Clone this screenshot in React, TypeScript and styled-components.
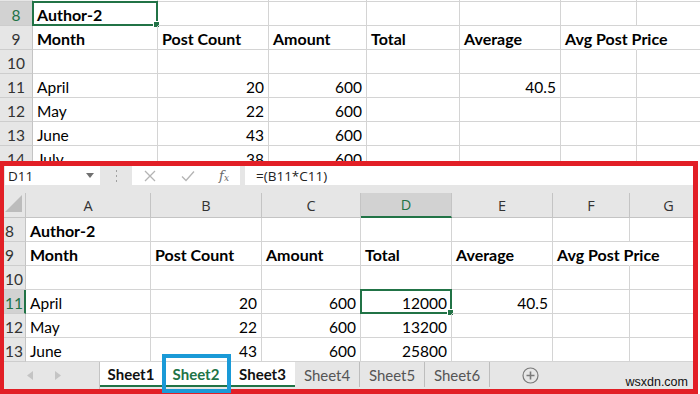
import React from "react";
import styled, { createGlobalStyle, css } from "styled-components";

const GREEN = "#217346";
const GRID = "#d4d4d4";
const HEADER_BG = "#e6e6e6";
const HEADER_SEL = "#d2d2d2";
const RED = "#e21f26";

type CellData = { v?: string | number; bold?: boolean; selected?: boolean };
type RowData = { n: number; cells: CellData[]; selected?: boolean };

const TOP_COLS = "33px 125px 111px 98px 93px 101px 76px 80px";
const BOTTOM_COLS = "22px 125px 111px 99px 91px 101px 77px 78px";

const headings = ["Month", "Post Count", "Amount", "Total", "Average", "Avg Post Price"].map(
  (v) => ({ v, bold: true })
);

const topRows: RowData[] = [
  { n: 7, cells: [] },
  { n: 8, selected: true, cells: [{ v: "Author-2", bold: true, selected: true }] },
  { n: 9, cells: headings },
  { n: 10, cells: [] },
  { n: 11, cells: [{ v: "April" }, { v: 20 }, { v: 600 }, {}, { v: 40.5 }] },
  { n: 12, cells: [{ v: "May" }, { v: 22 }, { v: 600 }] },
  { n: 13, cells: [{ v: "June" }, { v: 43 }, { v: 600 }] },
  { n: 14, cells: [{ v: "July" }, { v: 38 }, { v: 600 }] },
];

const bottomRows: RowData[] = [
  { n: 8, cells: [{ v: "Author-2", bold: true }] },
  { n: 9, cells: headings },
  { n: 10, cells: [] },
  {
    n: 11,
    selected: true,
    cells: [{ v: "April" }, { v: 20 }, { v: 600 }, { v: 12000, selected: true }, { v: 40.5 }],
  },
  { n: 12, cells: [{ v: "May" }, { v: 22 }, { v: 600 }, { v: 13200 }] },
  { n: 13, cells: [{ v: "June" }, { v: 43 }, { v: 600 }, { v: 25800 }] },
];

const letters = ["A", "B", "C", "D", "E", "F", "G"];
const sheets = [
  { name: "Sheet1", width: 62 },
  { name: "Sheet2", width: 68 },
  { name: "Sheet3", width: 65 },
  { name: "Sheet4", width: 65 },
  { name: "Sheet5", width: 65 },
  { name: "Sheet6", width: 65 },
];

function SheetRows({ rows, narrow }: { rows: RowData[]; narrow?: boolean }) {
  return (
    <>
      {rows.map((row, i) => (
        <Row key={row.n} $cols={narrow ? BOTTOM_COLS : TOP_COLS} $scrolled={!narrow && i === 0}>
          <RowNumber $selected={row.selected} $narrow={narrow}>
            {row.n}
          </RowNumber>
          {letters.map((_, c) => {
            const cell = row.cells[c] || {};
            const isNumber = typeof cell.v === "number";
            const spill = typeof cell.v === "string" && cell.v.length > 12;
            return (
              <Cell
                key={c}
                $right={isNumber}
                $bold={cell.bold}
                $selected={cell.selected}
                $spill={spill}
              >
                {cell.v}
              </Cell>
            );
          })}
        </Row>
      ))}
    </>
  );
}

function FormulaBar() {
  return (
    <FormulaBarContainer>
      <NameBox>
        D11
        <svg width="8" height="5" viewBox="0 0 8 5">
          <path d="M0 0h8L4 5z" fill="#707070" />
        </svg>
      </NameBox>
      <Grip>
        <svg width="3" height="12" viewBox="0 0 3 12">
          <rect x="1" y="0" width="1" height="2" fill="#a0a0a0" />
          <rect x="1" y="5" width="1" height="2" fill="#a0a0a0" />
          <rect x="1" y="10" width="1" height="2" fill="#a0a0a0" />
        </svg>
      </Grip>
      <FormulaButtons>
        <svg width="12" height="12" viewBox="0 0 12 12">
          <path d="M1 1l10 10M11 1L1 11" stroke="#b4b4b4" strokeWidth="1.3" />
        </svg>
        <svg width="14" height="12" viewBox="0 0 14 12">
          <path d="M1 6.5l4 4L13 1.5" stroke="#b4b4b4" strokeWidth="1.3" fill="none" />
        </svg>
        <FxLabel>
          f<sub>x</sub>
        </FxLabel>
      </FormulaButtons>
      <FormulaInput>=(B11*C11)</FormulaInput>
    </FormulaBarContainer>
  );
}

function ColumnHeaders() {
  return (
    <HeaderStrip>
      <Row $cols={BOTTOM_COLS} $header>
        <Corner>
          <svg width="17" height="17" viewBox="0 0 17 17">
            <path d="M17 0V17H0z" fill="#bcbcbc" />
          </svg>
        </Corner>
        {letters.map((l) => (
          <ColumnLetter key={l} $selected={l === "D"}>
            {l}
          </ColumnLetter>
        ))}
      </Row>
    </HeaderStrip>
  );
}

function TabBar() {
  return (
    <TabBarContainer>
      <TabNav>
        <svg width="6" height="9" viewBox="0 0 6 9">
          <path d="M6 0v9L0 4.5z" fill="#c4c4c4" />
        </svg>
        <svg width="6" height="9" viewBox="0 0 6 9">
          <path d="M0 0v9l6-4.5z" fill="#c4c4c4" />
        </svg>
      </TabNav>
      {sheets.map((s, i) => (
        <Tab key={s.name} $width={s.width} $grouped={i < 3} $active={i === 1}>
          {s.name}
        </Tab>
      ))}
      <AddSheet>
        <svg width="17" height="17" viewBox="0 0 17 17">
          <circle cx="8.5" cy="8.5" r="7.5" stroke="#7a7a7a" strokeWidth="1.2" fill="none" />
          <path d="M8.5 4.5v8M4.5 8.5h8" stroke="#7a7a7a" strokeWidth="1.6" />
        </svg>
      </AddSheet>
      <Watermark>wsxdn.com</Watermark>
    </TabBarContainer>
  );
}

export default function App() {
  return (
    <>
      <GlobalStyle />
      <Page>
        <TopSheet>
          <SheetRows rows={topRows} />
        </TopSheet>
        <Highlight>
          <FormulaBar />
          <ColumnHeaders />
          <BottomGrid>
            <SheetRows rows={bottomRows} narrow />
          </BottomGrid>
          <TabBar />
        </Highlight>
      </Page>
    </>
  );
}

const GlobalStyle = createGlobalStyle`
  html, body {
    margin: 0;
    padding: 0;
    background: #ffffff;
  }
  body {
    font-family: Lato, "Liberation Sans", sans-serif;
  }
`;

const Page = styled.div`
  width: 700px;
  height: 394px;
  overflow: hidden;
  background: #ffffff;
`;

const TopSheet = styled.div`
  height: 161px;
  overflow: hidden;
`;

const Row = styled.div<{ $cols: string; $scrolled?: boolean; $header?: boolean }>`
  display: grid;
  grid-template-columns: ${(p) => p.$cols};
  height: ${(p) => (p.$header ? 25 : 24)}px;
  ${(p) =>
    p.$scrolled &&
    css`
      margin-top: -22px;
    `}
`;

const RowNumber = styled.div<{ $selected?: boolean; $narrow?: boolean }>`
  display: flex;
  align-items: center;
  justify-content: ${(p) => (p.$narrow ? "flex-start" : "center")};
  padding-left: ${(p) => (p.$narrow ? "1px" : "0")};
  box-sizing: border-box;
  background: ${(p) => (p.$selected ? HEADER_SEL : HEADER_BG)};
  color: ${(p) => (p.$selected ? GREEN : "#333")};
  border-bottom: 1px solid #cdcdcd;
  border-right: ${(p) => (p.$selected && p.$narrow ? `2px solid ${GREEN}` : "1px solid #c4c4c4")};
  font-size: 15.5px;
  padding-top: 2px;
  overflow: hidden;
`;

const Cell = styled.div<{ $right?: boolean; $bold?: boolean; $selected?: boolean; $spill?: boolean }>`
  position: relative;
  display: flex;
  align-items: center;
  justify-content: ${(p) => (p.$right ? "flex-end" : "flex-start")};
  box-sizing: border-box;
  padding: 2px 4px 0 4px;
  border-right: 1px solid ${(p) => (p.$spill ? "transparent" : GRID)};
  border-bottom: 1px solid ${GRID};
  font-size: ${(p) => (p.$bold ? 16 : 15.5)}px;
  font-weight: ${(p) => (p.$bold ? 700 : 400)};
  color: #000;
  white-space: nowrap;
  overflow: visible;
  z-index: ${(p) => (p.$spill ? 1 : 0)};

  ${(p) =>
    p.$selected &&
    css`
      &::after {
        content: "";
        position: absolute;
        left: -1px;
        top: -1px;
        right: -1px;
        bottom: -1px;
        border: 2px solid ${GREEN};
      }
      &::before {
        content: "";
        position: absolute;
        right: -3px;
        bottom: -3px;
        width: 5px;
        height: 5px;
        background: ${GREEN};
        border: 1px solid #fff;
        z-index: 2;
      }
    `}
`;

const Highlight = styled.div`
  width: 698px;
  height: 233px;
  box-sizing: border-box;
  border: 5px solid ${RED};
  border-left-width: 4px;
  display: flex;
  flex-direction: column;
  background: ${HEADER_BG};
`;

const FormulaBarContainer = styled.div`
  display: flex;
  height: 19px;
  background: ${HEADER_BG};
  font-family: "Open Sans", "Noto Sans", sans-serif;
  font-size: 13.5px;
  color: #222;
`;

const NameBox = styled.div`
  width: 95px;
  margin-left: 1px;
  background: #fff;
  display: flex;
  align-items: center;
  justify-content: space-between;
  padding: 0 6px 0 3px;
  box-sizing: border-box;
`;

const Grip = styled.div`
  width: 32px;
  display: flex;
  align-items: center;
  justify-content: center;
`;

const FormulaButtons = styled.div`
  width: 108px;
  background: #fff;
  display: flex;
  align-items: center;
  justify-content: space-between;
  padding: 0 11px 0 12px;
  box-sizing: border-box;
`;

const FxLabel = styled.span`
  font-family: "DejaVu Serif", "Liberation Serif", serif;
  font-style: italic;
  font-size: 13px;
  color: #6a6a6a;
  line-height: 1;

  sub {
    font-size: 9px;
    vertical-align: -1px;
  }
`;

const FormulaInput = styled.div`
  flex: 1;
  margin-left: 5px;
  background: #fff;
  display: flex;
  align-items: center;
  padding-left: 11px;
`;

const HeaderStrip = styled.div`
  padding-top: 8px;
  background: ${HEADER_BG};
  overflow: hidden;
`;

const Corner = styled.div`
  display: flex;
  align-items: flex-end;
  justify-content: flex-end;
  padding: 0 3px 5px 0;
  box-sizing: border-box;
  border-right: 1px solid #c4c4c4;
  border-bottom: 1px solid #c4c4c4;
`;

const ColumnLetter = styled.div<{ $selected?: boolean }>`
  display: flex;
  align-items: center;
  justify-content: center;
  box-sizing: border-box;
  font-family: "Open Sans", "Noto Sans", sans-serif;
  font-size: 14.5px;
  color: ${(p) => (p.$selected ? GREEN : "#333")};
  background: ${(p) => (p.$selected ? HEADER_SEL : HEADER_BG)};
  border-right: 1px solid #c4c4c4;
  border-bottom: ${(p) => (p.$selected ? `2px solid ${GREEN}` : "1px solid #c4c4c4")};
`;

const BottomGrid = styled.div`
  height: 144px;
  background: #fff;
  overflow: hidden;
`;

const TabBarContainer = styled.div`
  position: relative;
  flex: 1;
  display: flex;
  align-items: stretch;
  background: ${HEADER_BG};
  font-family: Lato, "Open Sans", sans-serif;
  font-size: 15px;
`;

const TabNav = styled.div`
  width: 96px;
  display: flex;
  align-items: center;
  gap: 22px;
  padding-left: 23px;
  box-sizing: border-box;
  border-right: 1px solid #c4c4c4;
`;

const Tab = styled.div<{ $width: number; $grouped?: boolean; $active?: boolean }>`
  position: relative;
  display: flex;
  align-items: center;
  justify-content: center;
  width: ${(p) => p.$width}px;
  height: 25px;
  padding-top: 1px;
  box-sizing: border-box;
  font-weight: ${(p) => (p.$grouped ? 700 : 400)};
  color: ${(p) => (p.$active ? GREEN : p.$grouped ? "#111" : "#555")};
  background: ${(p) => (p.$grouped ? "#fff" : HEADER_BG)};
  border-bottom: ${(p) => (p.$grouped ? `2px solid ${GREEN}` : "none")};
  border-right: ${(p) => (p.$grouped ? "none" : "1px solid #bdbdbd")};

  ${(p) =>
    p.$active &&
    css`
      &::after {
        content: "";
        position: absolute;
        left: 0;
        right: -1px;
        top: -8px;
        bottom: -8px;
        border: 4px solid #1a9ad7;
        z-index: 3;
      }
    `}
`;

const AddSheet = styled.div`
  display: flex;
  align-items: center;
  margin-left: 32px;
`;

const Watermark = styled.div`
  position: absolute;
  right: 5px;
  bottom: 0px;
  font-family: "Liberation Sans", Arial, sans-serif;
  font-size: 12.5px;
  color: #111;
`;
